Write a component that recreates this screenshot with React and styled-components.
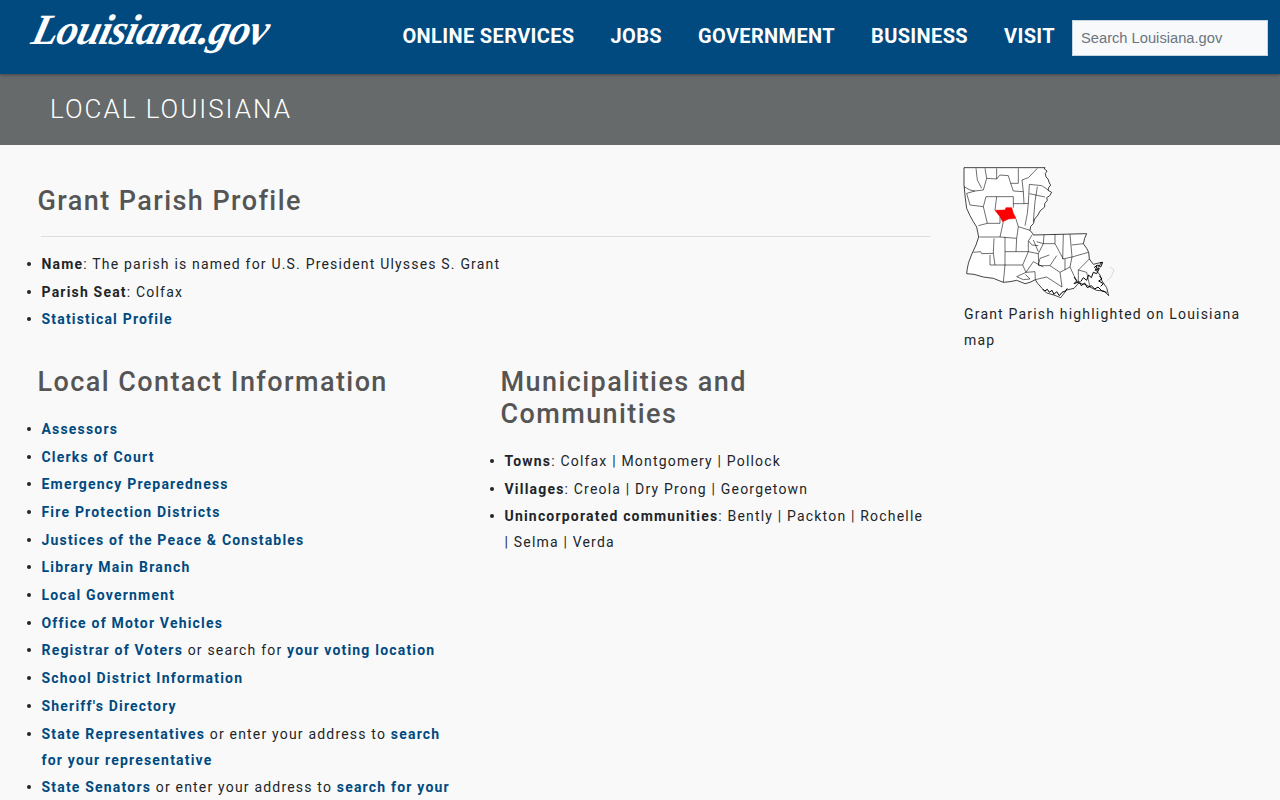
import React from 'react';
import styled, { createGlobalStyle } from 'styled-components';

const Global = createGlobalStyle`
  html, body { margin: 0; padding: 0; background: #f9f9f9; }
  * { box-sizing: border-box; }
`;
const Page = styled.div`
  height: 800px; overflow: hidden; font-family: Roboto, sans-serif; font-size: 14px;
  letter-spacing: 1.19px; color: #212529; background: #f9f9f9;
`;
const Header = styled.header`
  height: 74px; background: #004a80; display: flex; align-items: center; justify-content: space-between;
  padding: 0 12px 0 27px; box-shadow: 0 1px 3px rgba(0,0,0,.35); position: relative;
`;
const Logo = styled.a`
  font-family: "Liberation Serif", serif; font-style: italic; font-weight: 700; font-size: 43px; line-height: 50px;
  letter-spacing: -0.95px; color: #fff; display: block; width: 240px; margin-top: -14px; white-space: nowrap;
  transform: skewX(-14deg) scaleX(.98); transform-origin: left bottom;
`;
const Right = styled.div` display: flex; align-items: center; `;
const Nav = styled.nav` display: flex; gap: 36px; margin: 0 17px 2px 0; `;
const NavLink = styled.a`
  color: #fff; font-size: 20px; font-weight: 700; letter-spacing: .36px; line-height: 24px; white-space: nowrap;
`;
const Search = styled.input`
  width: 196px; height: 36px; background: #f7f9fb; border: 1px solid #c4d5e2; padding: 0 8px; font-family: "Liberation Sans", sans-serif;
  font-size: 14.7px; letter-spacing: 0; margin-top: 1px;
  &::placeholder { color: #6c757d; opacity: 1; }
`;
const Band = styled.div`
  height: 71px; background: #666a6a; color: #fff; font-size: 26px; font-weight: 300; letter-spacing: 2px;
  padding: 20px 0 0 50px; line-height: 30px;
`;
const Body = styled.main`
  display: grid; grid-template-columns: 930px 290px; column-gap: 34px;
`;
const Main = styled.div` padding: 40px 0 0 37.5px; `;
const Title = styled.h2`
  margin: 0; font-size: 27px; font-weight: 500; letter-spacing: 1.42px; line-height: 32px; color: #555;
`;
const Rule = styled.hr` margin: 19px 0 14px 3.5px; border: 0; border-top: 1px solid #ddd; `;
const List = styled.ul` margin: 0; padding: 0 0 0 4px; list-style: none; `;
const Item = styled.li`
  line-height: 26px; margin-bottom: 1.7px; position: relative;
  &::before { content: ""; position: absolute; left: -15px; top: 11px; width: 4px; height: 4px; border-radius: 50%; background: #212529; }
`;
const Strong = styled.b` font-weight: 700; `;
const Link = styled.a` color: #004a80; font-weight: 700; `;
const Columns = styled.div` display: grid; grid-template-columns: 463px 429.5px; margin-top: 33.6px; `;
const ColLeft = styled.section` padding-right: 45px; & > h2 { margin-bottom: 18px; } `;
const ColRight = styled.section` & > h2 { margin-bottom: 18px; } `;
const Aside = styled.aside` padding-top: 22px; line-height: 26px; `;
const Map = styled.svg` display: block; width: 180px; height: 155px; margin: -12px 0 -9px -14px; `;

const outline = '42,38 285,38 283,42 291,48 286,56 288,66 294,72 298,84 302,90 296,98 294,106 305,112 299,122 290,128 292,136 284,146 284,156 270,168 264,180 254,192 250,206 242,214 240,226 248,236 250,240 410,236 404,250 400,266 410,280 416,292 418,312 430,328 455,322 444,338 440,348 450,360 456,378 470,398 476,422 462,408 440,406 420,396 405,388 385,385 372,400 350,405 332,428 312,420 290,414 276,400 262,384 256,374 240,382 225,386 200,376 180,380 160,382 130,370 100,366 72,358 50,356 52,340 56,322 66,296 78,270 86,246 80,216 70,200 60,182 50,160 46,130 42,90';
const lines = [
  '42,95 60,105 75,108 100,105 110,70 105,40','110,70 140,72 140,40','140,72 150,60 175,62 182,85 205,85 205,40',
  '75,108 50,115','50,115 60,150 100,155 108,125 140,125 135,165','140,125 190,125 190,158','182,85 190,108 220,110 216,75 235,68 262,40',
  '220,110 222,146 190,146','222,146 235,145 238,88 275,92 295,105','238,116 285,126','235,145 232,175 225,212','262,95 255,140 250,200',
  '78,40 82,75 95,100','100,155 112,205 85,212','112,205 150,205 150,185','160,200 150,246 88,246','198,192 205,215 240,226','205,215 200,250 150,246','200,250 198,290 165,290 165,246',
  '132,250 130,295 95,296 92,290 70,292','130,295 135,330 120,330 120,300','165,290 165,330 135,330','198,290 235,290 235,258 246,240','235,290 218,330 165,330','165,330 160,382',
  '218,330 228,352 200,365','228,352 255,350 256,374','235,290 265,296 280,266 315,266 315,238','280,266 282,240','315,266 328,290 340,312','340,238 338,312 366,306 360,238','365,270 400,266','366,306 415,292',
  '265,296 266,332 300,332 320,302','300,332 330,352 360,336 366,306','330,352 336,396 290,366 256,374','360,336 372,362 385,385','418,312 385,345 385,385','280,336 250,320 228,352','250,255 265,290','280,266 260,260',
  '236,258 246,270 265,272','298,300 270,310 265,330','345,312 345,345','200,365 220,374 240,372 226,358','385,345 410,352 420,396',
];
const marsh = [
  '278,402 284,408 292,403 298,412 306,406 312,418 320,410 328,422 336,412 346,408 352,400',
  '372,366 380,378 372,386 388,380 394,392 404,384 412,398 424,392 434,402 444,396 456,408 470,412',
  '432,338 442,330 436,346 448,340 440,356 430,352 424,368 416,360 410,376 400,368 392,380',
  '450,324 458,322 452,336 444,330','448,362 456,372 446,378 460,386 452,394',
];

const items = ['Assessors','Clerks of Court','Emergency Preparedness','Fire Protection Districts','Justices of the Peace & Constables','Library Main Branch','Local Government','Office of Motor Vehicles'];

export default function App() {
  return (
    <Page>
      <Global />
      <Header>
        <Logo>Louisiana.gov</Logo>
        <Right>
          <Nav>
            {['ONLINE SERVICES','JOBS','GOVERNMENT','BUSINESS','VISIT'].map(t => <NavLink key={t}>{t}</NavLink>)}
          </Nav>
          <Search placeholder="Search Louisiana.gov" />
        </Right>
      </Header>
      <Band>LOCAL LOUISIANA</Band>
      <Body>
        <Main>
          <Title>Grant Parish Profile</Title>
          <Rule />
          <List>
            <Item><Strong>Name</Strong>: The parish is named for U.S. President Ulysses S. Grant</Item>
            <Item><Strong>Parish Seat</Strong>: Colfax</Item>
            <Item><Link>Statistical Profile</Link></Item>
          </List>
          <Columns>
            <ColLeft>
              <Title>Local Contact Information</Title>
              <List>
                {items.map(t => <Item key={t}><Link>{t}</Link></Item>)}
                <Item><Link>Registrar of Voters</Link> or search for <Link>your voting location</Link></Item>
                <Item><Link>School District Information</Link></Item>
                <Item><Link>Sheriff's Directory</Link></Item>
                <Item><Link>State Representatives</Link> or enter your address to <Link>search for your representative</Link></Item>
                <Item><Link>State Senators</Link> or enter your address to <Link>search for your senator</Link></Item>
              </List>
            </ColLeft>
            <ColRight>
              <Title>Municipalities and<br />Communities</Title>
              <List>
                <Item><Strong>Towns</Strong>: Colfax | Montgomery | Pollock</Item>
                <Item><Strong>Villages</Strong>: Creola | Dry Prong | Georgetown</Item>
                <Item><Strong>Unincorporated communities</Strong>: Bently | Packton | Rochelle | Selma | Verda</Item>
              </List>
            </ColRight>
          </Columns>
        </Main>
        <Aside>
          <Map viewBox="0 0 540 465" fill="none" stroke="#000" strokeWidth="1.7">
            <polygon points={outline} fill="#fff" strokeWidth="2.2" />
            {lines.map((p, i) => <polyline key={i} points={p} />)}
            {marsh.map((p, i) => <polyline key={i} points={p} strokeWidth="3" />)}
            <polyline points="480,335 492,345 484,365 470,378" stroke="#999" strokeWidth="1" />
            <polygon points="135,166 165,165 168,158 185,158 190,175 198,190 175,192 158,200 150,185" fill="#f00" stroke="#e00" />
          </Map>
          Grant Parish highlighted on Louisiana map
        </Aside>
      </Body>
    </Page>
  );
}
